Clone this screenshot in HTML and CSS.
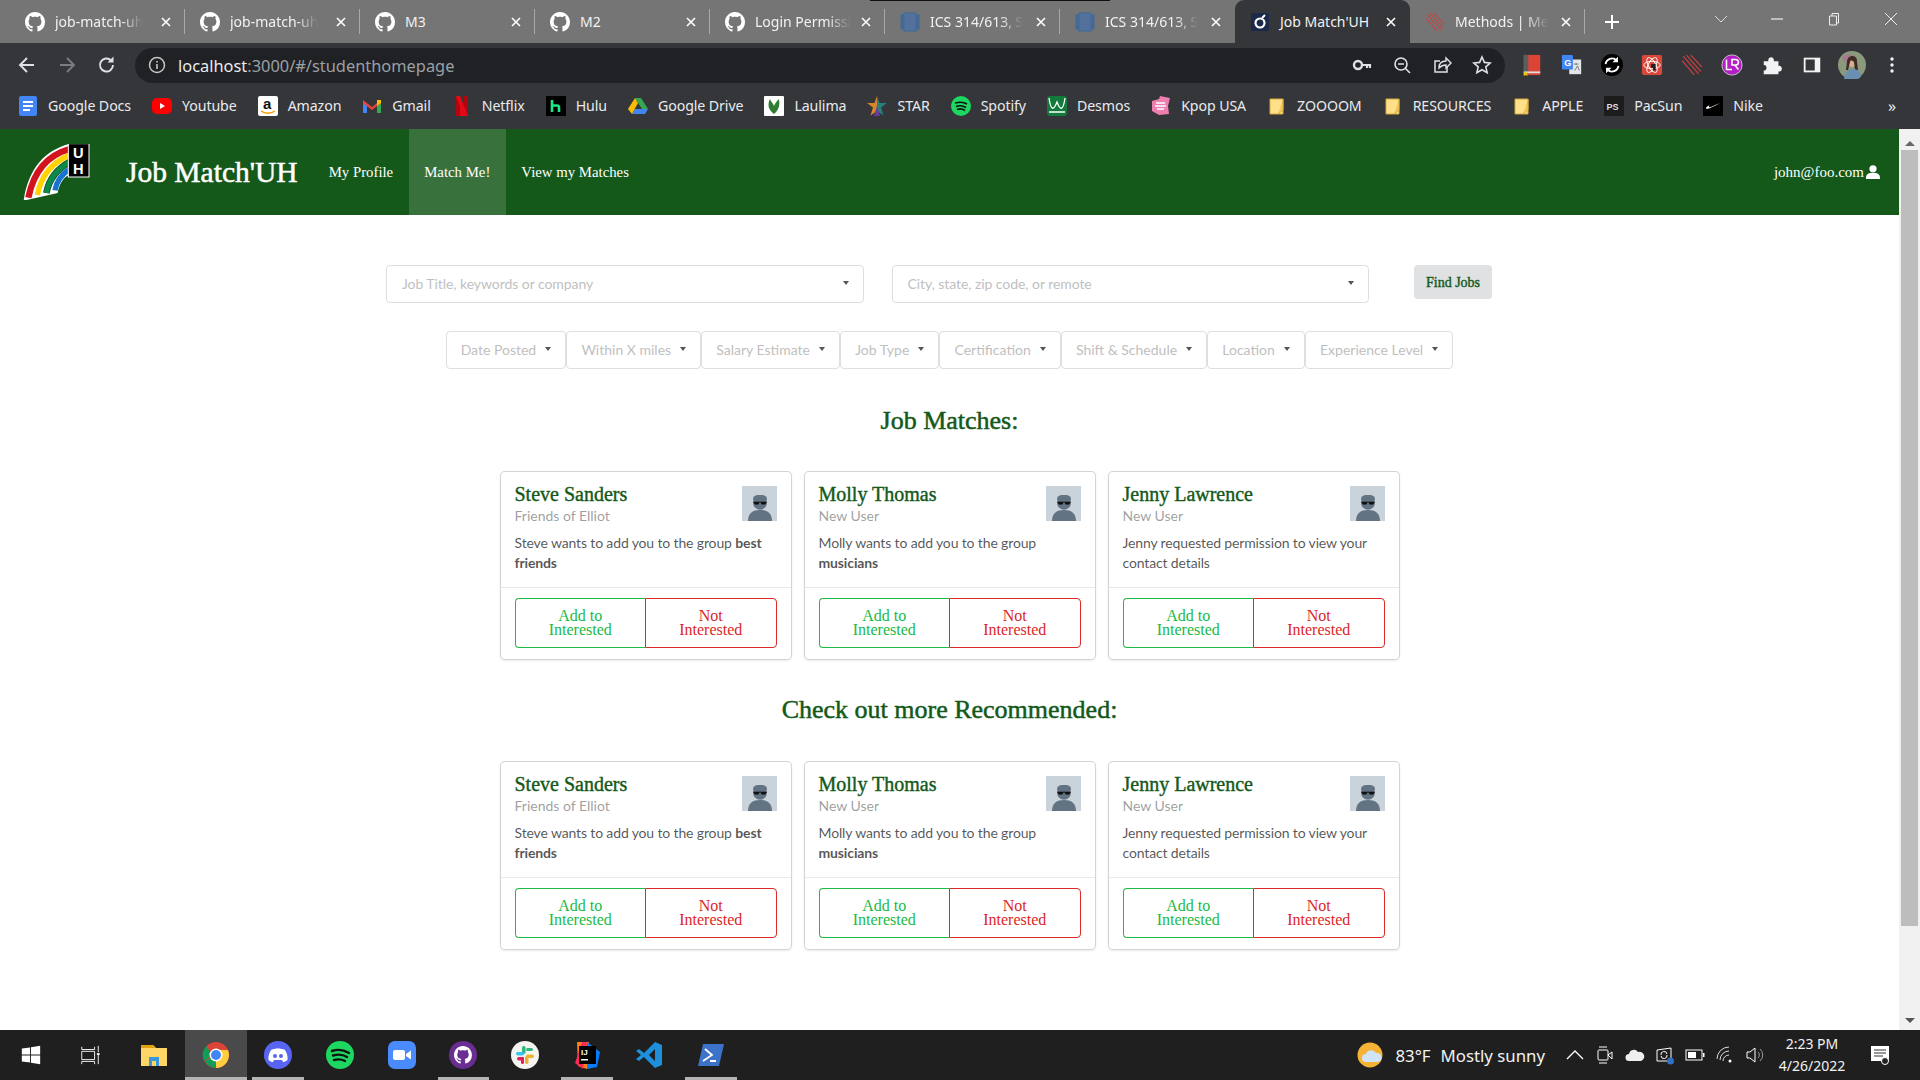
FILE: index.html
```html
<!DOCTYPE html>
<html lang="en">
<head>
<meta charset="utf-8">
<title>Job Match'UH</title>
<link rel="stylesheet" href="styles.css">
</head>
<body>
<svg class="defs" width="0" height="0">
  <symbol id="gh" viewBox="0 0 16 16"><path fill="#fff" d="M8 0C3.58 0 0 3.58 0 8c0 3.54 2.29 6.53 5.47 7.59.4.07.55-.17.55-.38 0-.19-.01-.82-.01-1.49-2.01.37-2.53-.49-2.69-.94-.09-.23-.48-.94-.82-1.13-.28-.15-.68-.52-.01-.53.63-.01 1.08.58 1.23.82.72 1.21 1.87.87 2.33.66.07-.52.28-.87.51-1.07-1.78-.2-3.64-.89-3.64-3.95 0-.87.31-1.59.82-2.15-.08-.2-.36-1.02.08-2.12 0 0 .67-.21 2.2.82.64-.18 1.32-.27 2-.27.68 0 1.36.09 2 .27 1.53-1.04 2.2-.82 2.2-.82.44 1.1.16 1.92.08 2.12.51.56.82 1.27.82 2.15 0 3.07-1.87 3.75-3.65 3.95.29.25.54.73.54 1.48 0 1.07-.01 1.93-.01 2.2 0 .21.15.46.55.38A8.013 8.013 0 0016 8c0-4.42-3.58-8-8-8z"/></symbol>
  <symbol id="doc" viewBox="0 0 20 20"><rect x="1" y="3" width="18" height="14" fill="#4a6890" stroke="#3c6a9c" stroke-width="1"/><rect x="4" y="1" width="12" height="18" fill="#53719b" stroke="#3c6a9c"/></symbol>
  <symbol id="meth" viewBox="0 0 20 20"><path d="M2 2l14 16M5 1l13 15M1 6l11 13M9 1l10 11" stroke="#c9423f" stroke-width="1.1" fill="none"/></symbol>
  <symbol id="x" viewBox="0 0 12 12"><path d="M2 2l8 8M10 2l-8 8" stroke="#fff" stroke-width="1.6" fill="none"/></symbol>
  <symbol id="folder" viewBox="0 0 20 20"><path d="M3 3h13v15H3z" fill="#ffe08a" stroke="#d5a93f"/><path d="M11 18l5-4V3" fill="#f3c95c" stroke="#d5a93f"/></symbol>
  <symbol id="avatar" viewBox="0 0 35 35"><rect width="35" height="35" fill="#cad3da"/><circle cx="18" cy="17" r="6.8" fill="#627384"/><rect x="11" y="9" width="14" height="8" rx="5" fill="#627384"/><path d="M11 16.2h14" stroke="#111" stroke-width="1"/><rect x="12" y="16" width="5" height="2.4" rx="1" fill="#111"/><rect x="19" y="16" width="5" height="2.4" rx="1" fill="#111"/><path d="M6 35c0-8 5-11 12-11s12 3 12 11z" fill="#627384"/></symbol>
  <symbol id="user" viewBox="0 0 14 14"><circle cx="7" cy="3.8" r="3.6" fill="#fff"/><path d="M0 14v-1.5C0 9.5 2.3 8 4.5 8h5C11.7 8 14 9.5 14 12.500V14z" fill="#fff"/></symbol>
</svg>

<div class="screen">
  <span class="topstrip"></span>
  <header class="tabbar">
    <div class="tab"><svg class="fav"><use href="#gh"/></svg><span class="tab-title fade">job-match-uh</span><svg class="tab-x"><use href="#x"/></svg></div>
    <div class="tab"><svg class="fav"><use href="#gh"/></svg><span class="tab-title fade">job-match-uh</span><svg class="tab-x"><use href="#x"/></svg></div>
    <div class="tab"><svg class="fav"><use href="#gh"/></svg><span class="tab-title">M3</span><svg class="tab-x"><use href="#x"/></svg></div>
    <div class="tab"><svg class="fav"><use href="#gh"/></svg><span class="tab-title">M2</span><svg class="tab-x"><use href="#x"/></svg></div>
    <div class="tab"><svg class="fav"><use href="#gh"/></svg><span class="tab-title fade">Login Permissi</span><svg class="tab-x"><use href="#x"/></svg></div>
    <div class="tab"><svg class="fav"><use href="#doc"/></svg><span class="tab-title fade">ICS 314/613, S</span><svg class="tab-x"><use href="#x"/></svg></div>
    <div class="tab before-active"><svg class="fav"><use href="#doc"/></svg><span class="tab-title fade">ICS 314/613, S</span><svg class="tab-x"><use href="#x"/></svg></div>
    <div class="tab active"><svg class="fav" viewBox="0 0 20 20"><rect x="1" y="1" width="18" height="18" rx="2" fill="#1b2a4a"/><circle cx="10" cy="11" r="4.500" fill="none" stroke="#fff" stroke-width="2.200"/><path d="M12 6l3-3" stroke="#fff" stroke-width="2"/></svg><span class="tab-title">Job Match'UH</span><svg class="tab-x"><use href="#x"/></svg></div>
    <div class="tab"><svg class="fav"><use href="#meth"/></svg><span class="tab-title fade">Methods | Me</span><svg class="tab-x"><use href="#x"/></svg></div>
    <svg class="newtab" viewBox="0 0 16 16"><path d="M8 1v14M1 8h14" stroke="#fff" stroke-width="2"/></svg>
    <div class="winctl">
      <svg class="ctl chev" viewBox="0 0 14 14"><path d="M1 4l6 6 6-6" stroke="#ddd" fill="none"/></svg>
      <svg class="ctl" viewBox="0 0 14 14"><path d="M1 7h12" stroke="#eee" stroke-width="1.200"/></svg>
      <svg class="ctl" viewBox="0 0 14 14"><path d="M2.500 4h7v9h-7zM5 4V1.500h6.500V11H9.500" stroke="#eee" fill="none"/></svg>
      <svg class="ctl" viewBox="0 0 14 14"><path d="M1 1l12 12M13 1L1 13" stroke="#eee" fill="none"/></svg>
    </div>
  </header>

  <div class="toolbar">
    <span class="tb-cell"><svg class="ico" viewBox="0 0 20 20"><path d="M17 10H4M10 3l-7 7 7 7" stroke="#dfe1e5" stroke-width="1.900" fill="none"/></svg></span>
    <span class="tb-cell"><svg class="ico" viewBox="0 0 20 20"><path d="M3 10h13M10 3l7 7-7 7" stroke="#7b7c7f" stroke-width="1.900" fill="none"/></svg></span>
    <span class="tb-cell"><svg class="ico" viewBox="0 0 20 20"><path d="M16 10a6.500 6.500 0 1 1-2-4.700" stroke="#dfe1e5" stroke-width="1.900" fill="none"/><path d="M16.500 1.500v6h-6z" fill="#dfe1e5"/></svg></span>
    <div class="omnibox">
      <svg class="info" viewBox="0 0 20 20"><circle cx="10" cy="10" r="7.500" fill="none" stroke="#c4c7c5" stroke-width="1.500"/><path d="M10 9v5M10 6v1.600" stroke="#c4c7c5" stroke-width="1.600"/></svg>
      <span class="url"><span class="host">localhost</span>:3000/#/studenthomepage</span>
      <div class="omni-actions">
        <svg class="ico" viewBox="0 0 20 20"><circle cx="6" cy="10" r="4" fill="none" stroke="#dfe1e5" stroke-width="2.400"/><path d="M10 10h8v3M15 10v3" stroke="#dfe1e5" stroke-width="2.200" fill="none"/></svg>
        <svg class="ico" viewBox="0 0 20 20"><circle cx="9" cy="9" r="6" fill="none" stroke="#dfe1e5" stroke-width="1.600"/><path d="M13.500 13.500L18 18M6 9h6" stroke="#dfe1e5" stroke-width="1.600"/></svg>
        <svg class="ico" viewBox="0 0 20 20"><path d="M15 11v6H3V6h5" stroke="#dfe1e5" stroke-width="1.500" fill="none"/><path d="M7 13c0-5 3-7 7-7V3l5 5-5 5v-3c-3 0-5 1-7 3z" stroke="#dfe1e5" stroke-width="1.400" fill="none"/></svg>
        <svg class="ico" viewBox="0 0 20 20"><path d="M10 2l2.400 5.400 5.800.6-4.400 3.900 1.300 5.700L10 14.700 4.900 17.600l1.300-5.700L1.800 8l5.800-.6z" stroke="#dfe1e5" stroke-width="1.600" fill="none"/></svg>
      </div>
    </div>
    <div class="exts">
      <span class="tb-cell"><svg class="ext" viewBox="0 0 24 24"><rect x="3" y="1" width="18" height="22" fill="#de4436"/><rect x="3" y="1" width="5" height="22" fill="#5d5d5d"/><rect x="3" y="19" width="18" height="2" fill="#ddd"/><path d="M3 20h4v4l-2-1-2 1z" fill="#f4c20d"/></svg></span>
      <span class="tb-cell"><svg class="ext" viewBox="0 0 24 24"><rect x="9" y="6" width="13" height="16" fill="#e3e5e8"/><path d="M14 11h5M16.500 10v2M15 18l3-5 2 5" stroke="#777" fill="none"/><rect x="1" y="1" width="12" height="16" rx="1" fill="#4285f4"/><text class="ext-g" x="3.500" y="13">G</text></svg></span>
      <span class="tb-cell"><svg class="ext" viewBox="0 0 24 24"><circle cx="12" cy="12" r="12" fill="#000"/><path d="M5 11a7 7 0 0 1 12-4M19 13a7 7 0 0 1-12 4" stroke="#fff" stroke-width="2" fill="none"/><path d="M18.500 3v6h-6zM5.500 21v-6h6z" fill="#fff"/></svg></span>
      <span class="tb-cell"><svg class="ext" viewBox="0 0 24 24"><rect x="1" y="1" width="22" height="22" rx="2" fill="#d9463a"/><ellipse cx="12" cy="12" rx="9" ry="4" fill="none" stroke="#fff"/><ellipse cx="12" cy="12" rx="9" ry="4" fill="none" stroke="#fff" transform="rotate(60 12 12)"/><ellipse cx="12" cy="12" rx="9" ry="4" fill="none" stroke="#fff" transform="rotate(120 12 12)"/><path d="M11 11l5 0v7h-3v-3h-2z" fill="#222"/></svg></span>
      <span class="tb-cell"><svg class="ext" viewBox="0 0 20 20"><use href="#meth"/></svg></span>
      <span class="tb-cell"><svg class="ext" viewBox="0 0 24 24"><circle cx="12" cy="12" r="11" fill="#b41fc3" stroke="#ccc"/><path d="M6 6v11h6M12 6h4a3 3 0 0 1 0 6h-4zM15 12l4 5" stroke="#fff" stroke-width="1.700" fill="none"/></svg></span>
      <span class="tb-cell"><svg class="ext" viewBox="0 0 24 24"><path d="M3 8h5c-1-6 7-6 6 0h5v5c5-1 5 7 0 6v3H3v-4c4 1 4-7 0-6z" fill="#f1f3f4"/></svg></span>
      <span class="tb-cell"><svg class="ext" viewBox="0 0 24 24"><rect x="3" y="4" width="18" height="16" fill="#f1f3f4"/><rect x="5" y="6" width="10" height="12" fill="#35363a"/></svg></span>
      <span class="tb-cell"><svg class="profile" viewBox="0 0 28 28"><circle cx="14" cy="14" r="14" fill="#8b9a7d"/><path d="M4 6l6-3 6 2-8 8z" fill="#a57a8c"/><circle cx="14" cy="11" r="5" fill="#d9ad91"/><path d="M9 11c0-8 11-8 10 0l1 8h-3l-1-8c-2-2-4-2-4 0l-2 8H8z" fill="#3e2c22"/><path d="M6 28c1-8 5-10 9-10s8 2 8 8l-3 2z" fill="#6b8fb0"/></svg></span>
      <span class="tb-cell"><svg class="ico" viewBox="0 0 20 20"><circle cx="10" cy="4" r="1.700" fill="#f1f3f4"/><circle cx="10" cy="10" r="1.700" fill="#f1f3f4"/><circle cx="10" cy="16" r="1.700" fill="#f1f3f4"/></svg></span>
    </div>
  </div>

  <nav class="bookmarks">
    <a class="bm"><svg class="bm-i" viewBox="0 0 20 20"><rect x="1" width="18" height="20" rx="2" fill="#4285f4"/><path d="M5 6h10M5 10h10M5 14h7" stroke="#fff" stroke-width="1.800"/></svg>Google Docs</a>
    <a class="bm"><svg class="bm-i" viewBox="0 0 20 20"><rect y="2" width="20" height="16" rx="5" fill="#f00"/><path d="M8 7l5 3-5 3z" fill="#fff"/></svg>Youtube</a>
    <a class="bm"><svg class="bm-i" viewBox="0 0 20 20"><rect width="20" height="20" rx="2" fill="#fff"/><text class="bm-a" x="5" y="13">a</text><path d="M3 15c4 3 10 3 14 0" stroke="#f90" stroke-width="1.500" fill="none"/></svg>Amazon</a>
    <a class="bm"><svg class="bm-i" viewBox="0 0 20 20"><path d="M1 5v12h4V9z" fill="#4285f4"/><path d="M15 9v8h4V5z" fill="#34a853"/><path d="M1 4l9 7 9-7v3l-9 7-9-7z" fill="#ea4335"/><path d="M15 4h4v3l-4 3z" fill="#fbbc04"/></svg>Gmail</a>
    <a class="bm"><svg class="bm-i" viewBox="0 0 20 20"><path d="M4 0h4l4 20H8z" fill="#e50914"/><path d="M4 0h4v20l-4 0z" fill="#b1060f"/><path d="M12 0h4v20h-4z" fill="#b1060f"/><path d="M4 0h4l8 20h-4z" fill="#e50914"/></svg>Netflix</a>
    <a class="bm"><svg class="bm-i" viewBox="0 0 20 20"><rect width="20" height="20" fill="#000"/><path d="M6 4v12M6 9.500h5a2 2 0 0 1 2 2V16" stroke="#1ce783" stroke-width="2.600" fill="none"/></svg>Hulu</a>
    <a class="bm"><svg class="bm-i" viewBox="0 0 20 20"><path d="M7 2h6l7 11h-6z" fill="#34a853"/><path d="M4 18l3-5h13l-3 5z" fill="#4285f4"/><path d="M7 2l3 5-6 11-4-5z" fill="#fbbc04"/></svg>Google Drive</a>
    <a class="bm"><svg class="bm-i" viewBox="0 0 20 20"><rect width="20" height="20" rx="1" fill="#fff"/><path d="M10 18C3 13 4 7 6 3c1 3 3 4 4 7 1-3 3-5 5-7 1 6 0 11-5 15z" fill="#2e7d32"/></svg>Laulima</a>
    <a class="bm"><svg class="bm-i" viewBox="0 0 20 20"><path d="M10 0l2.500 7H20l-6 4.500 2.500 8L10 15z" fill="#26807e"/><path d="M10 0L7.500 7H0l6 4.500-2.500 8L10 15z" fill="#d9862a"/><path d="M10 10l3 10h-6z" fill="#6a3d9a"/></svg>STAR</a>
    <a class="bm"><svg class="bm-i" viewBox="0 0 20 20"><circle cx="10" cy="10" r="10" fill="#1ed760"/><path d="M4 7c4-1 9-1 12 1M5 10.500c3-1 7-1 10 1M6 13.500c3-1 6-.5 8 1" stroke="#111" stroke-width="1.600" fill="none"/></svg>Spotify</a>
    <a class="bm"><svg class="bm-i" viewBox="0 0 20 20"><rect width="20" height="20" rx="3" fill="#127a3a"/><path d="M2 2c2 14 5 12 8 4 3 8 6 10 8-4M2 16h16" stroke="#fff" stroke-width="1.300" fill="none"/></svg>Desmos</a>
    <a class="bm"><svg class="bm-i" viewBox="0 0 20 20"><path d="M1 5l7-2 1-3 10 2-2 8 1 8-10 1-7-4z" fill="#ef7fb0"/><path d="M5 7h9M4 10h11M6 13h7" stroke="#fff" stroke-width="1.500"/></svg>Kpop USA</a>
    <a class="bm bm-f"><svg class="bm-i" viewBox="0 0 20 20"><use href="#folder"/></svg>ZOOOOM</a>
    <a class="bm bm-f"><svg class="bm-i" viewBox="0 0 20 20"><use href="#folder"/></svg>RESOURCES</a>
    <a class="bm bm-f"><svg class="bm-i" viewBox="0 0 20 20"><use href="#folder"/></svg>APPLE</a>
    <a class="bm"><svg class="bm-i" viewBox="0 0 20 20"><rect width="20" height="20" rx="1" fill="#1c1c1c"/><text class="bm-ps" x="2.500" y="14">PS</text></svg>PacSun</a>
    <a class="bm"><svg class="bm-i" viewBox="0 0 20 20"><rect width="20" height="20" fill="#000"/><path d="M3 12c0 2 3 1 14-5-6 2-9 5-11 4 0-1 0-1.500 1-2-2 1-4 2-4 3z" fill="#fff"/></svg>Nike</a>
    <span class="bm-more">»</span>
  </nav>

  <div class="viewport">
    <div class="page">
      <div class="appbar">
        <svg class="logo" viewBox="24 27 204 168">
          <path d="M26 197C40 100 90 45 166 26V118C145 125 132 150 128 174z" fill="#fff"/>
          <path d="M40 188C56 108 100 60 164 42" stroke="#d2121d" stroke-width="19" fill="none"/>
          <path d="M67 180C78 122 112 82 164 60" stroke="#ffd200" stroke-width="16" fill="none"/>
          <path d="M94 174C102 132 126 102 164 81" stroke="#1a4f1c" stroke-width="20" fill="none"/>
          <path d="M94 174C102 132 126 102 164 81" stroke="#0c8a4a" stroke-width="15" fill="none"/>
          <path d="M120 166C124 140 140 118 164 102" stroke="#1673d2" stroke-width="16" fill="none"/>
          <rect x="160" y="26" width="62" height="100" fill="#000" stroke="#fff" stroke-width="3"/>
          <text class="logo-l" x="174" y="70">U</text>
          <text class="logo-l" x="174" y="118">H</text>
        </svg>
        <span class="brand">Job Match'UH</span>
        <a class="navlink">My Profile</a>
        <a class="navlink current">Match Me!</a>
        <a class="navlink">View my Matches</a>
        <span class="account">john@foo.com<svg class="acct-i"><use href="#user"/></svg></span>
      </div>

      <main class="content">
        <div class="searchrow">
          <div class="selectbox"><span>Job Title, keywords or company</span><i class="caret"></i></div>
          <div class="selectbox"><span>City, state, zip code, or remote</span><i class="caret"></i></div>
          <button class="find">Find Jobs</button>
        </div>

        <div class="filters">
          <div class="filter">Date Posted<i class="caret"></i></div>
          <div class="filter">Within X miles<i class="caret"></i></div>
          <div class="filter">Salary Estimate<i class="caret"></i></div>
          <div class="filter">Job Type<i class="caret"></i></div>
          <div class="filter">Certification<i class="caret"></i></div>
          <div class="filter">Shift &amp; Schedule<i class="caret"></i></div>
          <div class="filter">Location<i class="caret"></i></div>
          <div class="filter">Experience Level<i class="caret"></i></div>
        </div>

        <h2 class="section">Job Matches:</h2>
        <div class="cards">
          <article class="card">
            <div class="card-body">
              <div class="card-head"><div><h3 class="name">Steve Sanders</h3><div class="meta">Friends of Elliot</div></div><svg class="face"><use href="#avatar"/></svg></div>
              <p class="desc">Steve wants to add you to the group <strong>best</strong> <strong>friends</strong></p>
            </div>
            <div class="card-foot"><button class="btn yes">Add to Interested</button><button class="btn no">Not Interested</button></div>
          </article>
          <article class="card">
            <div class="card-body">
              <div class="card-head"><div><h3 class="name">Molly Thomas</h3><div class="meta">New User</div></div><svg class="face"><use href="#avatar"/></svg></div>
              <p class="desc">Molly wants to add you to the group <strong>musicians</strong></p>
            </div>
            <div class="card-foot"><button class="btn yes">Add to Interested</button><button class="btn no">Not Interested</button></div>
          </article>
          <article class="card">
            <div class="card-body">
              <div class="card-head"><div><h3 class="name">Jenny Lawrence</h3><div class="meta">New User</div></div><svg class="face"><use href="#avatar"/></svg></div>
              <p class="desc">Jenny requested permission to view your contact details</p>
            </div>
            <div class="card-foot"><button class="btn yes">Add to Interested</button><button class="btn no">Not Interested</button></div>
          </article>
        </div>

        <h2 class="section second">Check out more Recommended:</h2>
        <div class="cards">
          <article class="card">
            <div class="card-body">
              <div class="card-head"><div><h3 class="name">Steve Sanders</h3><div class="meta">Friends of Elliot</div></div><svg class="face"><use href="#avatar"/></svg></div>
              <p class="desc">Steve wants to add you to the group <strong>best</strong> <strong>friends</strong></p>
            </div>
            <div class="card-foot"><button class="btn yes">Add to Interested</button><button class="btn no">Not Interested</button></div>
          </article>
          <article class="card">
            <div class="card-body">
              <div class="card-head"><div><h3 class="name">Molly Thomas</h3><div class="meta">New User</div></div><svg class="face"><use href="#avatar"/></svg></div>
              <p class="desc">Molly wants to add you to the group <strong>musicians</strong></p>
            </div>
            <div class="card-foot"><button class="btn yes">Add to Interested</button><button class="btn no">Not Interested</button></div>
          </article>
          <article class="card">
            <div class="card-body">
              <div class="card-head"><div><h3 class="name">Jenny Lawrence</h3><div class="meta">New User</div></div><svg class="face"><use href="#avatar"/></svg></div>
              <p class="desc">Jenny requested permission to view your contact details</p>
            </div>
            <div class="card-foot"><button class="btn yes">Add to Interested</button><button class="btn no">Not Interested</button></div>
          </article>
        </div>
      </main>
    </div>
    <div class="scrollbar">
      <i class="sb-up"></i>
      <div class="sb-track"><div class="sb-thumb"></div></div>
      <i class="sb-down"></i>
    </div>
  </div>

  <footer class="taskbar">
    <div class="apps">
      <span class="app"><svg class="ti" viewBox="0 0 24 24"><path d="M2 5l9-1.300V11.500H2zM12 3.500L22 2v9.500H12zM2 12.500h9v7.800L2 19zM12 12.500h10V22l-10-1.500z" fill="#fff"/></svg></span>
      <span class="app shift"><svg class="ti" viewBox="0 0 24 24"><path d="M3 3v3h14V3M3 8h14v9H3zM3 22v-3h14v3M21 2v7M21 12v10" stroke="#fff" fill="none"/><rect x="19.500" y="10" width="3" height="2" fill="#fff"/></svg></span>
      <span class="app"><svg class="ti big" viewBox="0 0 28 28"><path d="M1 4h12l3 3h11v18H1z" fill="#ffd666"/><path d="M1 4h12l3 3H1z" fill="#e2a10f"/><path d="M9 16h10v9h-3v-5h-4v5H9z" fill="#3a97d9"/></svg></span>
      <span class="app on lit"><svg class="ti big" viewBox="0 0 28 28"><circle cx="14" cy="14" r="13" fill="#db4437"/><path d="M14 14L3 20a13 13 0 0 0 11 7z" fill="#0f9d58"/><path d="M2 20A13 13 0 0 1 4.500 5L10 14z" fill="#0f9d58"/><path d="M14 27a13 13 0 0 0 12-18H14z" fill="#ffcd40"/><circle cx="14" cy="14" r="6.500" fill="#fff"/><circle cx="14" cy="14" r="5" fill="#4285f4"/></svg></span>
      <span class="app on"><svg class="ti big" viewBox="0 0 28 28"><circle cx="14" cy="14" r="14" fill="#5865f2"/><path d="M7 9c4-2 10-2 14 0 2 3 3 7 2.500 10-2 1.500-3 2-4.500 2l-1-2H10l-1 2c-1.500 0-2.500-.5-4.500-2C4 16 5 12 7 9z" fill="#fff"/><circle cx="11" cy="15" r="2" fill="#5865f2"/><circle cx="17" cy="15" r="2" fill="#5865f2"/></svg></span>
      <span class="app"><svg class="ti big" viewBox="0 0 28 28"><circle cx="14" cy="14" r="14" fill="#1ed760"/><path d="M6 10c6-2 12-1 17 2M7 14.500c5-1.500 10-1 14 1.500M8 19c4-1 8-.6 11 1" stroke="#111" stroke-width="2.400" fill="none" stroke-linecap="round"/></svg></span>
      <span class="app"><svg class="ti big" viewBox="0 0 28 28"><rect width="28" height="28" rx="7" fill="#4a8cff"/><rect x="5" y="9" width="12" height="10" rx="2" fill="#fff"/><path d="M18 13l5-3.500v9L18 15z" fill="#fff"/></svg></span>
      <span class="app on"><svg class="ti big" viewBox="0 0 28 28"><circle cx="14" cy="14" r="14" fill="#6a2d91"/><g transform="translate(5 5) scale(1.120)"><use href="#gh" width="16" height="16"/></g></svg></span>
      <span class="app"><svg class="ti big" viewBox="0 0 28 28"><circle cx="14" cy="14" r="14" fill="#f4f4f0"/><rect x="11" y="5" width="3.500" height="8" rx="1.700" fill="#2eb67d"/><rect x="15" y="7" width="7" height="3" rx="1.500" fill="#2eb67d"/><rect x="5" y="11" width="8" height="3.500" rx="1.700" fill="#36c5f0"/><rect x="14" y="15" width="3.500" height="8" rx="1.700" fill="#ecb22e"/><rect x="15" y="13.500" width="8" height="3.500" rx="1.700" fill="#ecb22e"/><rect x="6" y="16" width="7" height="3.500" rx="1.700" fill="#e01e5a"/><rect x="10" y="16" width="3" height="7" rx="1.500" fill="#e01e5a"/></svg></span>
      <span class="app on"><svg class="ti big" viewBox="0 0 28 28"><path d="M4 1h12l-2 27-9-3z" fill="#fc801d"/><path d="M14 1l13 10-3 15-10 2z" fill="#087cfa"/><path d="M2 22L9 1h5l-4 27z" fill="#fe2857"/><rect x="6" y="5" width="17" height="18" fill="#000"/><text class="ij" x="8" y="14">IJ</text><rect x="8" y="18" width="7" height="1.500" fill="#fff"/></svg></span>
      <span class="app"><svg class="ti big" viewBox="0 0 28 28"><path d="M20 1l7 3v20l-7 3L9 16l-5 4-3-2 5-4-5-4 3-2 5 4zM20 8l-6 6 6 6z" fill="#1d8fdc"/></svg></span>
      <span class="app on"><svg class="ti big" viewBox="0 0 28 28"><path d="M6 3h21l-5 22H1z" fill="#3d72c9"/><path d="M8 8l7 6-9 6M13 20h6" stroke="#fff" stroke-width="1.800" fill="none"/></svg></span>
    </div>
    <div class="tray">
      <span class="weather"><svg class="sun" viewBox="0 0 26 26"><circle cx="13" cy="13" r="12.500" fill="#f5b335"/><path d="M9 20a4 4 0 0 1 0-8 5.500 5.500 0 0 1 10-1 4.500 4.500 0 0 1 2 9z" fill="#cfe4f7"/></svg><span>83°F</span><span>Mostly sunny</span></span>
      <span class="sys chevup"><svg class="si" viewBox="0 0 20 20"><path d="M2 14l8-8 8 8" stroke="#fff" stroke-width="1.300" fill="none"/></svg></span>
      <span class="sys"><svg class="si" viewBox="0 0 20 20"><rect x="3" y="5" width="10" height="10" rx="1" fill="none" stroke="#fff"/><path d="M13 10l4-3v7z" fill="none" stroke="#fff"/><path d="M4 2h8M4 18h8" stroke="#fff"/></svg></span>
      <span class="sys"><svg class="si" viewBox="0 0 20 20"><path d="M4 16a3.500 3.500 0 0 1 0-7 5 5 0 0 1 9-2 4 4 0 0 1 3 9z" fill="#eee"/></svg></span>
      <span class="sys"><svg class="si" viewBox="0 0 20 20"><path d="M2 5l14-2v13H2z" stroke="#fff" fill="none"/><path d="M6 10a3 3 0 0 1 6-1M12 10a3 3 0 0 1-6 1" stroke="#fff" fill="none"/><circle cx="15.500" cy="16" r="3.500" fill="#2f72c4"/></svg></span>
      <span class="sys"><svg class="si" viewBox="0 0 20 20"><rect x="1" y="5" width="16" height="10" fill="none" stroke="#fff"/><rect x="3" y="7" width="8" height="6" fill="#fff"/><rect x="18" y="8" width="1.500" height="4" fill="#fff"/></svg></span>
      <span class="sys"><svg class="si" viewBox="0 0 20 20"><path d="M2 14a12 12 0 0 1 12-12M5 15a9 9 0 0 1 9-9M8 16a6 6 0 0 1 6-6" stroke="#ddd" fill="none"/><circle cx="15" cy="16" r="1.500" fill="#fff"/></svg></span>
      <span class="sys"><svg class="si" viewBox="0 0 20 20"><path d="M2 7h3l5-4v14l-5-4H2z" fill="none" stroke="#fff"/><path d="M13 7a4 4 0 0 1 0 6M15 4a8 8 0 0 1 0 12" stroke="#999" fill="none"/></svg></span>
      <span class="clock"><span>2:23 PM</span><span>4/26/2022</span></span>
      <span class="notif"><svg class="notif-i" viewBox="0 0 20 20"><path d="M1 1h18v15H1z" fill="#fff"/><path d="M4 5h12M4 8h12M4 11h9" stroke="#333"/><circle cx="15" cy="16" r="3.500" fill="#222" stroke="#fff"/></svg></span>
    </div>
  </footer>
</div>
</body>
</html>
```
FILE: styles.css
```css
* { box-sizing: border-box; }
html, body { margin: 0; padding: 0; overflow: hidden; }
body { width: 1920px; height: 1080px; font-family: "Lato", sans-serif; background: #fff; }
.defs { position: absolute; }
.screen { position: relative; width: 1920px; height: 1080px; display: flex; flex-direction: column; }
.topstrip { position: absolute; top: 0; left: 870px; width: 240px; height: 1px; background: #111; }

/* browser tabs */
.tabbar { height: 43px; flex: none; background: #757575; display: flex; align-items: stretch; padding-left: 10px; font-family: "Noto Sans", sans-serif; font-size: 14px; color: #f2f2f2; }
.tab { width: 175px; flex: none; display: flex; align-items: center; padding: 0 13px 0 15px; position: relative; }
.tab::after { content: ""; position: absolute; right: 0; top: 9px; height: 25px; width: 1px; background: #a8a8a8; }
.tab.before-active::after, .tab.active::after { display: none; }
.tab.active { background: #35363a; border-radius: 9px 9px 0 0; }
.fav { width: 20px; height: 20px; flex: none; margin-right: 10px; }
.tab-title { white-space: nowrap; }
.tab-title.fade { -webkit-mask-image: linear-gradient(to right, #000 75%, transparent 100%); mask-image: linear-gradient(to right, #000 75%, transparent 100%); }
.tab-x { width: 12px; height: 12px; flex: none; margin-left: auto; }
.newtab { width: 16px; height: 16px; flex: none; margin: 14px 0 0 19px; }
.winctl { margin-left: auto; display: flex; align-items: flex-start; padding-right: 1px; }
.ctl { width: 14px; height: 14px; margin: 12px 21px 0 22px; }
.chev { margin-right: 20px; }

/* browser toolbar */
.toolbar { height: 44px; flex: none; background: #35363a; display: flex; align-items: center; padding-left: 7px; }
.tb-cell { width: 40px; height: 35px; flex: none; display: flex; align-items: center; justify-content: center; }
.ico { width: 20px; height: 20px; flex: none; }
.omnibox { width: 1370px; height: 35px; flex: none; margin-left: 8px; background: #202124; border-radius: 18px; display: flex; align-items: center; padding-left: 12px; padding-right: 13px; }
.info { width: 20px; height: 20px; margin-right: 11px; }
.url { font-family: "Noto Sans", sans-serif; font-size: 16.400px; color: #9aa0a6; }
.host { color: #e8eaed; }
.omni-actions { margin-left: auto; display: flex; gap: 20px; }
.exts { margin-left: 7px; display: flex; }
.ext { width: 22px; height: 22px; }
.ext-g { font: bold 10px "Liberation Sans", sans-serif; fill: #fff; }
.profile { width: 28px; height: 28px; }

/* bookmarks */
.bookmarks { height: 42px; flex: none; background: #35363a; display: flex; align-items: center; padding: 0 0 5px 18px; gap: 21px; font-family: "Noto Sans", sans-serif; font-size: 14.200px; color: #e8eaed; letter-spacing: -.1px; }
.bm { display: flex; align-items: center; gap: 10px; white-space: nowrap; }
.bm-i { width: 20px; height: 20px; flex: none; }
.bm-a { font: bold 15px "Liberation Sans", sans-serif; fill: #111; }
.bm-ps { font: bold 9px "Liberation Sans", sans-serif; fill: #ddd; }
.bm-more { margin-left: auto; padding-right: 24px; font-size: 16px; }

/* page area */
.viewport { flex: 1; min-height: 0; display: flex; }
.page { flex: 1; min-width: 0; background: #fff; }
.appbar { height: 86px; background: #14591a; display: flex; align-items: stretch; font-family: "Liberation Serif", serif; color: #fff; }
.logo { width: 68px; height: 56px; flex: none; margin: 15px 0 0 23px; }
.logo-l { font: bold 44px "Liberation Sans", sans-serif; fill: #fff; }
.brand { font-size: 29.500px; align-self: center; margin-left: 35px; margin-right: 15.500px; -webkit-text-stroke: .5px #fff; white-space: nowrap; }
.navlink { display: flex; align-items: center; font-size: 14.800px; padding: 0 15.500px; white-space: nowrap; }
.navlink.current { background: #38713c; }
.account { margin-left: auto; display: flex; align-items: center; gap: 2px; padding-right: 19px; font-size: 15px; }
.acct-i { width: 14px; height: 14px; }

.content { display: flex; flex-direction: column; align-items: center; padding-top: 50px; }
.searchrow { display: flex; align-items: flex-start; padding-right: 21px; }
.selectbox { width: 477.500px; height: 38px; border: 1px solid #dedede; border-radius: 4px; display: flex; align-items: center; justify-content: space-between; padding: 0 14px 2px 15px; font-size: 14px; letter-spacing: -.06px; color: #bfbfbf; }
.selectbox + .selectbox { margin-left: 28px; }
.caret { display: inline-block; width: 0; height: 0; border-left: 3.500px solid transparent; border-right: 3.500px solid transparent; border-top: 4.500px solid #555; }
.find { width: 78px; height: 34px; margin-left: 45px; border: 0; border-radius: 4px; background: #e0e1e2; font: 14px "Liberation Serif", serif; -webkit-text-stroke: .4px #14591a; color: #14591a; padding: 1px 0 0; }

.filters { display: flex; margin-top: 28px; }
.filter { height: 38px; border: 1px solid #dedede; border-radius: 4px; display: flex; align-items: center; gap: 9.200px; padding: 0 14px 2px; font-size: 14px; color: #bfbfbf; white-space: nowrap; }

.section { height: 103px; margin: 0; display: flex; align-items: center; font: 400 26px "Liberation Serif", serif; -webkit-text-stroke: .5px #14591a; color: #14591a; }
.section.second { padding-bottom: 2px; }
.cards { display: flex; gap: 14px; }
.card { width: 290px; height: 187px; border-radius: 4px; background: #fff; box-shadow: 0 1px 3px 0 #d4d4d5, 0 0 0 1px #d4d4d5; display: flex; flex-direction: column; }
.card-body { flex: 1; padding: 14px 14px 0; }
.card-head { display: flex; justify-content: space-between; height: 40px; }
.name { margin: 0; font: 400 20px/17px "Liberation Serif", serif; -webkit-text-stroke: .4px #14591a; color: #14591a; }
.meta { margin-top: 3px; font-size: 14px; line-height: 20px; color: rgba(0,0,0,.4); }
.face { width: 35px; height: 35px; flex: none; }
.desc { margin: 7px 0 0; font-size: 14px; line-height: 20px; letter-spacing: -.14px; color: rgba(0,0,0,.68); }
.desc strong { font-weight: 700; color: rgba(0,0,0,.68); }
.card-foot { flex: none; height: 72px; border-top: 1px solid rgba(34,36,38,.1); padding: 10px 14px 0; display: flex; }
.btn { flex: 1; height: 50px; background: #fff; font: 16px/14px "Liberation Serif", serif; padding: 0 20px; }
.btn.yes { border: 1px solid #21ba45; border-right: 0; border-radius: 4px 0 0 4px; color: #21ba45; }
.btn.no { border: 1px solid #db2828; border-radius: 0 4px 4px 0; color: #db2828; }

/* scrollbar */
.scrollbar { width: 21px; flex: none; background: #f1f1f1; display: flex; flex-direction: column; align-items: center; padding: 12px 0 7px; }
.sb-up { width: 0; height: 0; border-left: 5px solid transparent; border-right: 5px solid transparent; border-bottom: 5px solid #666; flex: none; }
.sb-down { width: 0; height: 0; border-left: 5px solid transparent; border-right: 5px solid transparent; border-top: 5px solid #555; flex: none; }
.sb-track { flex: 1; width: 100%; padding: 4px 2px 0; }
.sb-thumb { height: 776px; background: #bdbdbd; }

/* windows taskbar */
.taskbar { height: 50px; flex: none; background: #1f1f1f; display: flex; justify-content: space-between; font-family: "Noto Sans", sans-serif; color: #f2f2f2; }
.apps { display: flex; }
.app { width: 61.800px; height: 50px; display: flex; align-items: center; justify-content: center; position: relative; }
.app.shift { padding-right: 6px; }
.app.on::after { content: ""; position: absolute; left: 5px; right: 5px; bottom: 0; height: 3px; background: #b4b4b4; }
.app.lit { background: #4a4a4a; }
.app.lit::after { left: 0; right: 0; }
.ti { width: 22px; height: 22px; }
.ti.big { width: 28px; height: 28px; }
.ij { font: bold 8px "Liberation Sans", sans-serif; fill: #fff; }
.tray { display: flex; align-items: center; }
.weather { display: flex; align-items: center; gap: 10px; font-size: 16.800px; margin-right: 15px; }
.sun { width: 26px; height: 26px; margin-right: 2px; }
.sys { width: 30px; display: flex; justify-content: center; }
.si { width: 20px; height: 20px; }
.clock { width: 84px; display: flex; flex-direction: column; align-items: center; gap: 2px; font-size: 14px; line-height: 20px; }
.notif { width: 66px; display: flex; justify-content: center; padding-right: 14px; }
.notif-i { width: 20px; height: 20px; }
```
